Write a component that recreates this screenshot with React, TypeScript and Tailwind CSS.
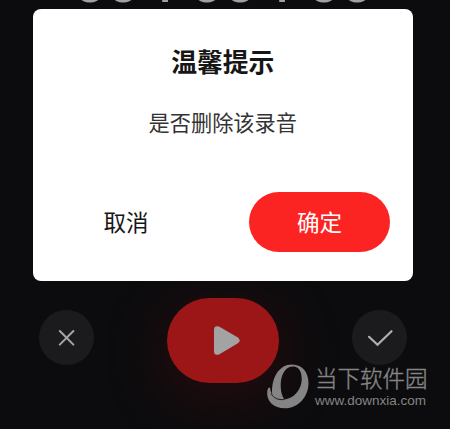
function Digits({ children }: { children: string }) {
  return <span className="w-[67px] text-center">{children}</span>;
}

function Timer() {
  return (
    <div className="flex h-[3px] items-end justify-center overflow-hidden pr-[3px] font-['Liberation_Sans',Arial,sans-serif] text-[60px] leading-[60px] text-[#a0a1a3]">
      <div className="flex translate-y-[9px]">
        <Digits>00</Digits>
        <span className="w-[50px] text-center">:</span>
        <Digits>00</Digits>
        <span className="w-[50px] text-center">:</span>
        <Digits>00</Digits>
      </div>
    </div>
  );
}

function Dialog() {
  return (
    <section className="relative z-10 ml-[33px] mt-[6px] flex h-[272px] w-[379.5px] flex-col items-center rounded-lg bg-white">
      <h1 className="mt-[33px] text-[25.8px] font-bold leading-[38px] text-[#161616]">温馨提示</h1>
      <p className="mt-[26px] text-[21.2px] leading-[32px] text-[#333]">是否删除该录音</p>
      <div className="mt-[54px] flex w-full pl-[22px]">
        <button className="h-[60px] w-[142px] text-[22.5px] text-[#161616]">取消</button>
        <button className="ml-[52px] h-[60px] w-[141px] rounded-full bg-[#fc2323] text-[22.5px] text-white">确定</button>
      </div>
    </section>
  );
}

function Controls() {
  return (
    <div className="flex pl-[39px] pt-[17px]">
      <button className="mt-[12px] flex size-[55px] items-center justify-center rounded-full bg-[#1b1b1d]">
        <svg width="18" height="18" viewBox="0 0 18 18" fill="none" stroke="#a6a6a7" strokeWidth="2" strokeLinecap="round">
          <path d="M1.8 2 15.4 15.6M15.4 2 1.8 15.6" />
        </svg>
      </button>
      <button className="ml-[73px] flex h-[85px] w-[112px] items-center justify-center rounded-full bg-[#9c1618] pl-[8px] shadow-[0_12px_60px_4px_rgba(120,10,14,0.26)]">
        <svg width="28" height="31" viewBox="0 0 28 31" fill="#a3a3a3">
          <path d="M1 5Q1 0 6 1.6L24.5 12.2Q29 15.5 24.5 18.6L6 29.5Q1 31 1 26Z" />
        </svg>
      </button>
      <button className="ml-[73px] mt-[12px] flex size-[55px] items-center justify-center rounded-full bg-[#1b1b1d]">
        <svg width="28" height="20" viewBox="0 0 28 20" fill="none" stroke="#b0b0b0" strokeWidth="2.2" strokeLinecap="round">
          <path d="M3 8.8 11.5 16.8 25.5 3.2" />
        </svg>
      </button>
    </div>
  );
}

function Watermark() {
  return (
    <div className="absolute left-[266px] top-[363px] z-10 flex text-[#858484]">
      <svg width="44" height="46" viewBox="0 0 44 46" fill="currentColor">
        <path
          fillRule="evenodd"
          d="M26 1.5C37 1.5 42.5 10 42.5 20C42.5 34 32 45.3 19 45.3C7.5 45.3 0 38 1.3 28Q2 24 4 24.6Q4.2 28.5 6.2 31.5C5 15 13 1.5 26 1.5ZM26.5 3.5C18.500 4 14.500 13 14.700 23C14.900 29 16 33 18.300 36.300C27 36 35.700 27 35.700 16C35.700 8 32.500 3 26.500 3.500Z"
        />
        <path d="M5 30.500C7.500 35 12 37.300 18.500 36.500" fill="none" stroke="#1a0d0f" strokeWidth="0.900" />
      </svg>
      <div className="ml-[5px]">
        <div className="whitespace-nowrap text-[22.5px] font-light leading-[29px] [-webkit-text-stroke:0.4px_#858484]">当下软件园</div>
        <div className="font-['Liberation_Sans',Arial,sans-serif] text-[13.5px] leading-[17px]">www.downxia.com</div>
      </div>
    </div>
  );
}

export default function App() {
  return (
    <main className="relative h-[429px] w-[450px] overflow-hidden bg-[#0c0c0e] font-['Noto_Sans_CJK_SC',sans-serif]">
      <Timer />
      <Dialog />
      <Controls />
      <Watermark />
    </main>
  );
}
